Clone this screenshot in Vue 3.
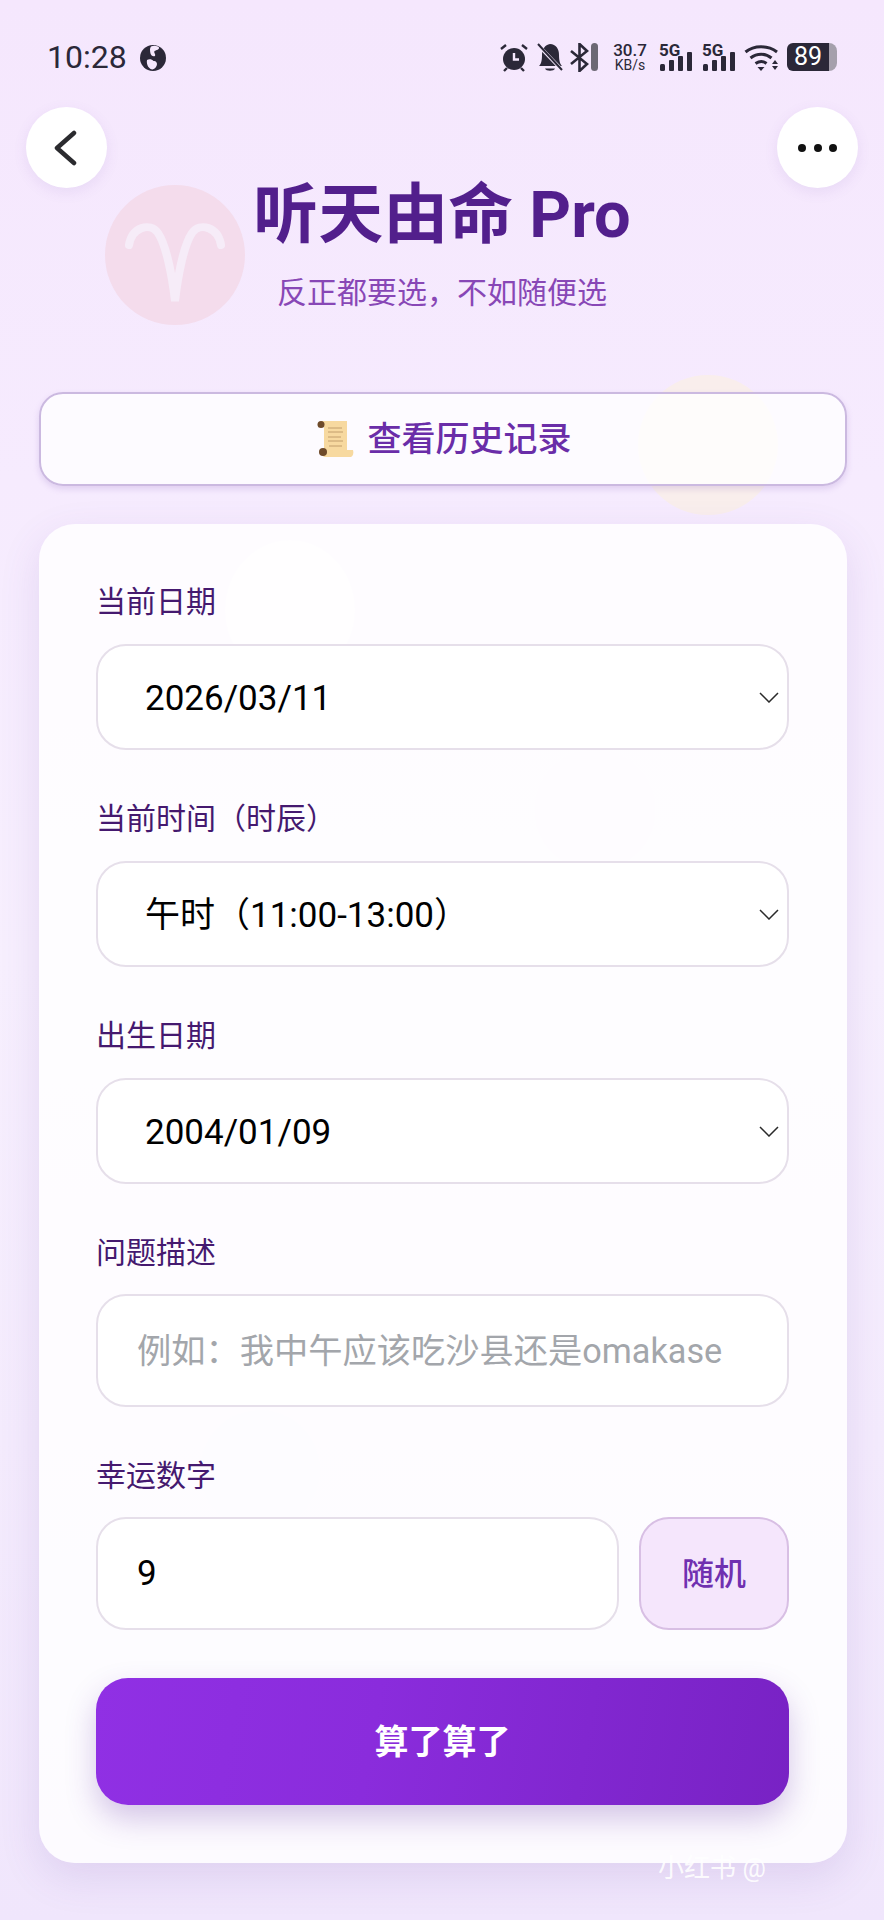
<script setup>
const fields = [
  { label: '当前日期', value: '2026/03/11' },
  { label: '当前时间（时辰）', value: '午时（11:00-13:00）' },
  { label: '出生日期', value: '2004/01/09' },
]
</script>

<template>
  <div class="page">
    <span class="blob blob-orange"></span>
    <span class="blob blob-white-a"></span>
    <span class="blob blob-white-b"></span>
    <span class="blob blob-white-c"></span>

    <div class="status">
      <span class="time">10:28</span>
      <svg class="globe" viewBox="0 0 26 26" width="26" height="26">
        <circle cx="13" cy="13" r="13" fill="#2b2838" />
        <path d="M11 1.5c3-1.5 7-.5 8 1 .5 2-2.500 2.500-4.500 3.500-1 2 1.500 3 .5 5-2 1-4-.5-4.500-2.500-.5-2.500-1-5 .5-7zM7 15c2-1.500 5-1 6.500 1 2-.5 3.500 1 3.500 3 0 2.500-2 5-4.500 5.500C9.500 24.500 6 20 7 15z" fill="#f5e8fd" />
      </svg>
      <div class="status-right">
        <svg class="i-alarm" viewBox="0 0 28 29" width="28" height="29">
          <circle cx="14" cy="16" r="11" fill="#2b2838" />
          <path d="M14 10v6.500h5" fill="none" stroke="#f5e8fd" stroke-width="2.400" />
          <path d="M1 6l5-4M27 6l-5-4M4 28l3-3M24 28l-3-3" stroke="#2b2838" stroke-width="2.400" fill="none" />
        </svg>
        <svg class="i-bell" viewBox="0 0 26 29" width="26" height="29">
          <path d="M2 23c2-2 3-5 3-11 0-6 3-10 8-11 6 0 9 5 9 11 0 6 1 9 3 11z" fill="#2b2838" />
          <path d="M8 25.500h10c-1 3-9 3-10 0z" fill="#2b2838" />
          <path d="M2 3l23 24" stroke="#f5e8fd" stroke-width="3.500" />
          <path d="M1 1l24 26" stroke="#2b2838" stroke-width="2" />
        </svg>
        <svg class="i-bt" viewBox="0 0 19 29" width="19" height="29">
          <path d="M1 8l16 13-7.500 7V1L17 8 1 21" fill="none" stroke="#2b2838" stroke-width="2.600" />
        </svg>
        <span class="pill"></span>
        <div class="speed"><span>30.7</span><span class="unit">KB/s</span></div>
        <div class="signal sig-a">
          <span class="five-g">5G</span>
          <svg viewBox="0 0 33 29" width="33" height="29">
            <rect x="1" y="21" width="5" height="7" rx="1.500" fill="#2b2838" />
            <rect x="10" y="17" width="5" height="11" rx="1" fill="#2b2838" />
            <rect x="19" y="13" width="5" height="15" rx="1" fill="#2b2838" />
            <rect x="28" y="9" width="5" height="19" rx="1" fill="#2b2838" />
          </svg>
        </div>
        <div class="signal sig-b">
          <span class="five-g">5G</span>
          <svg viewBox="0 0 33 29" width="33" height="29">
            <rect x="1" y="21" width="5" height="7" rx="1.500" fill="#2b2838" />
            <rect x="10" y="17" width="5" height="11" rx="1" fill="#2b2838" />
            <rect x="19" y="13" width="5" height="15" rx="1" fill="#2b2838" />
            <rect x="28" y="9" width="5" height="19" rx="1" fill="#2b2838" />
          </svg>
        </div>
        <svg class="i-wifi" viewBox="0 0 36 29" width="36" height="29">
          <path d="M1.500 9C10 2 24 2 33 9M6.500 15c6.500-5 15-5 21 0M11.500 20.500c4-2.500 8-2.500 11 0" fill="none" stroke="#2b2838" stroke-width="3" />
          <path d="M13.500 24h7l-3.500 4z" fill="#2b2838" />
          <path d="M28 21l3-4 3 4zM28 23l3 4 3-4z" fill="#2b2838" />
        </svg>
        <div class="battery"><span class="battery-body">89</span><span class="battery-rest"></span></div>
      </div>
    </div>

    <button class="nav nav-back" aria-label="返回">
      <svg viewBox="0 0 24 36" width="24" height="36">
        <path d="M21 3L4 18l17 15" fill="none" stroke="#2b2b2f" stroke-width="4.500" stroke-linecap="round" stroke-linejoin="round" />
      </svg>
    </button>
    <button class="nav nav-more" aria-label="更多">
      <i class="dot"></i><i class="dot"></i><i class="dot"></i>
    </button>

    <header class="head">
      <div class="aries">
        <svg viewBox="0 0 140 140" width="140" height="140">
          <path d="M24 60C27 42 45 37 53 48C61 60 67 90 70 116C73 90 79 60 87 48C95 37 113 42 116 60" fill="none" stroke="#f6ecf8" stroke-width="8" stroke-linecap="round" />
        </svg>
      </div>
      <h1 class="title">听天由命 Pro</h1>
      <p class="subtitle">反正都要选，不如随便选</p>
    </header>

    <main class="content">
      <button class="history">
        <svg viewBox="0 0 40 38" width="40" height="38">
          <path d="M6 1h26v29h6c1 3 0 6-2 7H9c-2-1-2-3-3-4h3V7H6z" fill="#f7d9a0" />
          <path d="M13 8h14M13 12h15M13 17h13M13 21h15M14 26h13" stroke="#c29e6c" stroke-width="1" />
          <circle cx="6" cy="4.500" r="3.500" fill="#6e4a2a" />
          <circle cx="8" cy="32" r="4" fill="#6e4a2a" />
        </svg>
        <span>查看历史记录</span>
      </button>

      <form class="card" @submit.prevent>
        <div v-for="f in fields" :key="f.label" class="group">
          <label class="label">{{ f.label }}</label>
          <div class="select-wrap">
            <select class="control select">
              <option>{{ f.value }}</option>
            </select>
            <svg class="chevron" viewBox="0 0 20 11" width="20" height="11">
              <path d="M1 1l9 9 9-9" fill="none" stroke="#2a2a2a" stroke-width="1.500" />
            </svg>
          </div>
        </div>

        <div class="group">
          <label class="label label-tall">问题描述</label>
          <input class="control tall" type="text" placeholder="例如：我中午应该吃沙县还是omakase" />
        </div>

        <div class="group">
          <label class="label label-tall">幸运数字</label>
          <div class="lucky">
            <input class="control tall" type="text" value="9" />
            <button type="button" class="random">随机</button>
          </div>
        </div>

        <button type="submit" class="submit">算了算了</button>
      </form>
    </main>

    <span class="watermark">小红书 @</span>
  </div>
</template>

<style>
html, body { margin: 0; }
</style>

<style scoped>
.page {
  position: relative;
  width: 884px;
  height: 1920px;
  overflow: hidden;
  background: linear-gradient(180deg, #f5e7fd 0%, #f6ebfe 25%, #f7effe 50%, #f4ebfd 75%, #f0e6fc 100%);
  font-family: Roboto, "Noto Sans CJK SC", sans-serif;
}
.blob { position: absolute; border-radius: 50%; }
.blob-orange { left: 638px; top: 375px; width: 140px; height: 140px; background: #f9eeec; }
.blob-white-a { left: 225px; top: 540px; width: 130px; height: 140px; background: #faf4ff; }
.blob-white-b { left: 535px; top: 750px; width: 120px; height: 120px; background: #f4ebfb; }
.blob-white-c { left: 200px; top: 1410px; width: 120px; height: 120px; background: #f3e9fb; }

.status {
  position: relative;
  height: 107px;
  box-sizing: border-box;
  padding: 43px 47px 0 47px;
  display: flex;
  align-items: flex-start;
  color: #2b2838;
}
.time { font-size: 32px; line-height: 29px; margin-right: 13px; }
.globe { margin-top: 2px; }
.status-right { margin-left: auto; display: flex; align-items: flex-start; height: 29px; }
.status-right > * { flex: none; }
.i-bell { margin-left: 9px; }
.i-bt { margin-left: 7px; }
.pill { width: 7px; height: 28px; margin-left: 2px; border-radius: 4px; background: #6c6874; }
.speed {
  margin-left: 14px;
  width: 36px;
  display: flex;
  flex-direction: column;
  align-items: center;
  font-size: 17px;
  line-height: 15px;
  font-weight: 500;
}
.unit { font-size: 14px; font-weight: 400; }
.signal { position: relative; width: 33px; height: 29px; }
.sig-a { margin-left: 11px; }
.sig-b { margin-left: 10px; }
.five-g { position: absolute; left: 0; top: -1px; font-size: 17px; line-height: 16px; font-weight: 700; }
.i-wifi { margin-left: 9px; }
.battery { margin-left: 7px; display: flex; height: 28px; }
.battery-body {
  width: 42px;
  height: 28px;
  border-radius: 6px 0 0 6px;
  background: #2b2838;
  color: #fff;
  font-size: 25px;
  line-height: 28px;
  text-align: center;
}
.battery-rest { width: 8px; height: 28px; border-radius: 0 8px 8px 0; background: #a5a0ac; }

.nav {
  position: absolute;
  top: 107px;
  width: 81px;
  height: 81px;
  padding: 0;
  border: 0;
  border-radius: 50%;
  background: #fff;
  box-shadow: 0 4px 14px rgba(120, 80, 180, 0.1);
  display: flex;
  align-items: center;
  justify-content: center;
  z-index: 2;
}
.nav-back { left: 26px; padding-right: 4px; }
.nav-more { left: 777px; gap: 7.500px; }
.dot { width: 8px; height: 8px; border-radius: 50%; background: #111; }

.head {
  position: relative;
  height: 285px;
  box-sizing: border-box;
  padding-top: 70px;
  text-align: center;
}
.aries {
  position: absolute;
  left: 105px;
  top: 78px;
  width: 140px;
  height: 140px;
  border-radius: 50%;
  background: #f4dcec;
}
.title {
  position: relative;
  margin: 0;
  font-size: 65px;
  line-height: 76px;
  font-weight: 700;
  color: #521f8c;
}
.subtitle {
  position: relative;
  margin: 20px 0 0;
  font-size: 30px;
  line-height: 40px;
  color: #8847b6;
}

.content { position: relative; padding: 0 37px 0 39px; }
.history {
  width: 100%;
  height: 94px;
  display: flex;
  align-items: center;
  justify-content: center;
  gap: 13px;
  border: 2px solid #cbb9e0;
  border-radius: 24px;
  background: rgba(255, 255, 255, 0.8);
  box-shadow: 0 3px 6px rgba(120, 80, 180, 0.18);
  color: #6a2da8;
  font: 500 34px/1 Roboto, "Noto Sans CJK SC", sans-serif;
}
.card {
  margin-top: 38px;
  box-sizing: border-box;
  height: 1339px;
  padding: 57px 58px 57px 57px;
  border-radius: 36px;
  background: rgba(255, 255, 255, 0.84);
  box-shadow: 0 14px 40px rgba(100, 60, 160, 0.13);
}
.group { margin-bottom: 48px; }
.label {
  display: block;
  margin-bottom: 21px;
  font-size: 30px;
  line-height: 42px;
  font-weight: 400;
  color: #45196f;
}
.label-tall { margin-bottom: 20px; }
.select-wrap { position: relative; }
.control {
  display: block;
  box-sizing: border-box;
  width: 100%;
  border: 2px solid #e6dfea;
  border-radius: 30px;
  background: #fff;
  color: #000;
  outline: none;
  font-family: Roboto, "Noto Sans CJK SC", sans-serif;
}
.select {
  height: 106px;
  padding: 2px 60px 0 47px;
  font-size: 35px;
  appearance: none;
  -webkit-appearance: none;
}
.chevron { position: absolute; right: 10px; top: 48px; pointer-events: none; }
.tall { height: 113px; padding: 0 39px; font-size: 34.250px; }
.tall::placeholder { color: #a3a6ab; opacity: 1; }
.lucky { display: flex; gap: 20px; }
.lucky .control { flex: 1; min-width: 0; font-size: 35px; }
.random {
  flex: none;
  width: 150px;
  height: 113px;
  border: 2px solid #d8bfe4;
  border-radius: 30px;
  background: #f5e6fc;
  color: #7030b0;
  font: 500 32px/1 Roboto, "Noto Sans CJK SC", sans-serif;
}
.submit {
  display: block;
  width: 100%;
  height: 127px;
  margin-top: 0;
  border: 0;
  border-radius: 32px;
  background: linear-gradient(100deg, #9030e4 0%, #8a2cdc 40%, #7822c4 100%);
  box-shadow: 0 14px 30px rgba(90, 40, 160, 0.25);
  color: #fff;
  font: 700 34px/1 Roboto, "Noto Sans CJK SC", sans-serif;
}
.watermark {
  position: absolute;
  left: 658px;
  top: 1851px;
  font-size: 26px;
  line-height: 34px;
  color: rgba(255, 255, 255, 0.9);
}
</style>
